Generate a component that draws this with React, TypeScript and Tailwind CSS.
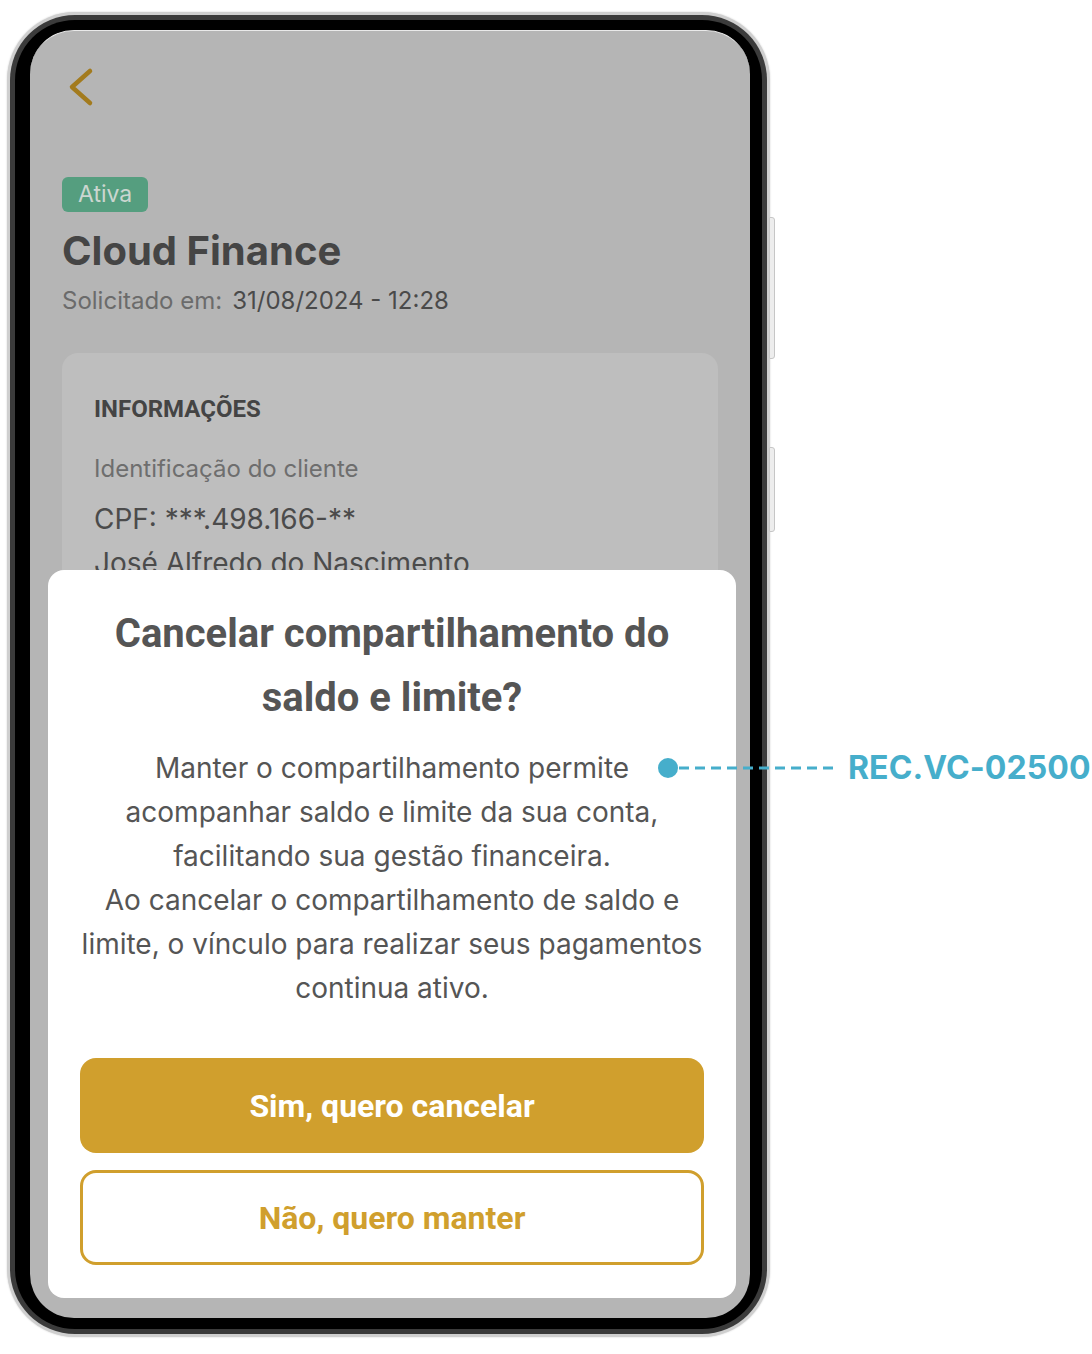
import React from "react";

const gold = "#d09f2d";

function BackChevron() {
  return (
    <svg width="28" height="40" viewBox="0 0 28 40" fill="none" className="ml-[4px] -mt-[2px] block">
      <path
        d="M24 4 L6 20 L24 36"
        stroke="#a37b1e"
        strokeWidth="4.5"
        strokeLinecap="round"
        strokeLinejoin="round"
      />
    </svg>
  );
}

function Annotation() {
  return (
    <div className="absolute left-[657px] top-[748px] flex items-center">
      <svg width="180" height="40" viewBox="0 0 180 40" className="block">
        <circle cx="11" cy="20" r="10" fill="#46aecb" />
        <line
          x1="22"
          y1="20"
          x2="177"
          y2="20"
          stroke="#46aecb"
          strokeWidth="3"
          strokeDasharray="10 6"
        />
      </svg>
      <span className="ml-[11px] font-['Inter',sans-serif] text-[32px] font-bold leading-none tracking-[0.1px] text-[#46aecb]">
        REC.VC-02500
      </span>
    </div>
  );
}

function Sheet() {
  return (
    <div className="absolute bottom-[20px] left-[18px] w-[688px] rounded-[16px] bg-white px-[28px] pb-[33px] pt-[32px]">
      <h2 className="text-center font-['Roboto',sans-serif] text-[40px] font-bold leading-[64px] text-[#555555]">
        Cancelar compartilhamento do
        <br />
        saldo e limite?
      </h2>
      <p className="mt-[16px] text-center font-['Inter',sans-serif] text-[28px] leading-[44px] text-[#555555]">
        Manter o compartilhamento permite
        <br />
        acompanhar saldo e limite da sua conta,
        <br />
        facilitando sua gestão financeira.
        <br />
        Ao cancelar o compartilhamento de saldo e
        <br />
        limite, o vínculo para realizar seus pagamentos
        <br />
        continua ativo.
      </p>
      <div className="mt-[48px] flex flex-col gap-[17px] px-[4px]">
        <button
          className="flex h-[95px] items-center justify-center rounded-[16px] font-['Roboto',sans-serif] text-[32px] font-bold text-white"
          style={{ backgroundColor: gold }}
        >
          Sim, quero cancelar
        </button>
        <button className="flex h-[95px] items-center justify-center rounded-[16px] border-[3px] border-[#d09f2d] bg-white font-['Roboto',sans-serif] text-[32px] font-bold text-[#d09f2d]">
          Não, quero manter
        </button>
      </div>
    </div>
  );
}

function Screen() {
  return (
    <div className="relative h-full overflow-hidden rounded-[44px] border-t-[1.5px] border-[#e9e9e9] bg-[#b5b5b5] font-['Inter',sans-serif]">
      <div className="px-[32px] pt-[38px]">
        <BackChevron />
        <div className="mt-[70px] inline-flex h-[35px] items-center rounded-[6px] bg-[#559e7f] px-[16px] text-[23px] text-[#cbd6d0]">
          Ativa
        </div>
        <h1 className="mt-[16px] text-[40px] font-bold leading-[46px] text-[#454545]">Cloud Finance</h1>
        <div className="mt-[12px] text-[24px] leading-[30px]">
          <span className="text-[#6b6b6b]">Solicitado em:</span>
          <span className="ml-[10px] text-[#4a4a4a]">31/08/2024 - 12:28</span>
        </div>
        <div className="mt-[37px] h-[400px] rounded-[16px] bg-[#bebebe] px-[32px] pt-[41px]">
          <div className="font-['Roboto',sans-serif] text-[24px] font-bold leading-[30px] text-[#444444]">
            INFORMAÇÕES
          </div>
          <div className="mt-[30px] text-[24px] leading-[30px] text-[#6e6e6e]">Identificação do cliente</div>
          <div className="mt-[17px] text-[28px] leading-[36px] text-[#4b4b4b]">CPF: ***.498.166-**</div>
          <div className="mt-[8px] text-[28px] leading-[36px] text-[#4b4b4b]">José Alfredo do Nascimento</div>
        </div>
      </div>
      <Sheet />
    </div>
  );
}

function Phone() {
  return (
    <div className="relative h-[1325px] w-[763px] rounded-[68px] bg-[#cfcfcf] p-[3px] shadow-[0_0_2px_rgba(0,0,0,0.2)]">
      <div className="absolute left-[762px] top-[205px] h-[142px] w-[6px] rounded-r-[3px] border border-[#c6c6c6] bg-[#ededed]" />
      <div className="absolute left-[762px] top-[435px] h-[85px] w-[6px] rounded-r-[3px] border border-[#c6c6c6] bg-[#ededed]" />
      <div className="h-full rounded-[65px] bg-[#3b3b3b] p-[5px]">
        <div className="h-full rounded-[60px] bg-black pb-[11px] pl-[15px] pr-[12px] pt-[10px]">
          <Screen />
        </div>
      </div>
    </div>
  );
}

export default function App() {
  return (
    <div className="relative h-[1354px] w-[1092px] overflow-hidden bg-white pl-[7px] pt-[12px]">
      <Phone />
      <Annotation />
    </div>
  );
}
